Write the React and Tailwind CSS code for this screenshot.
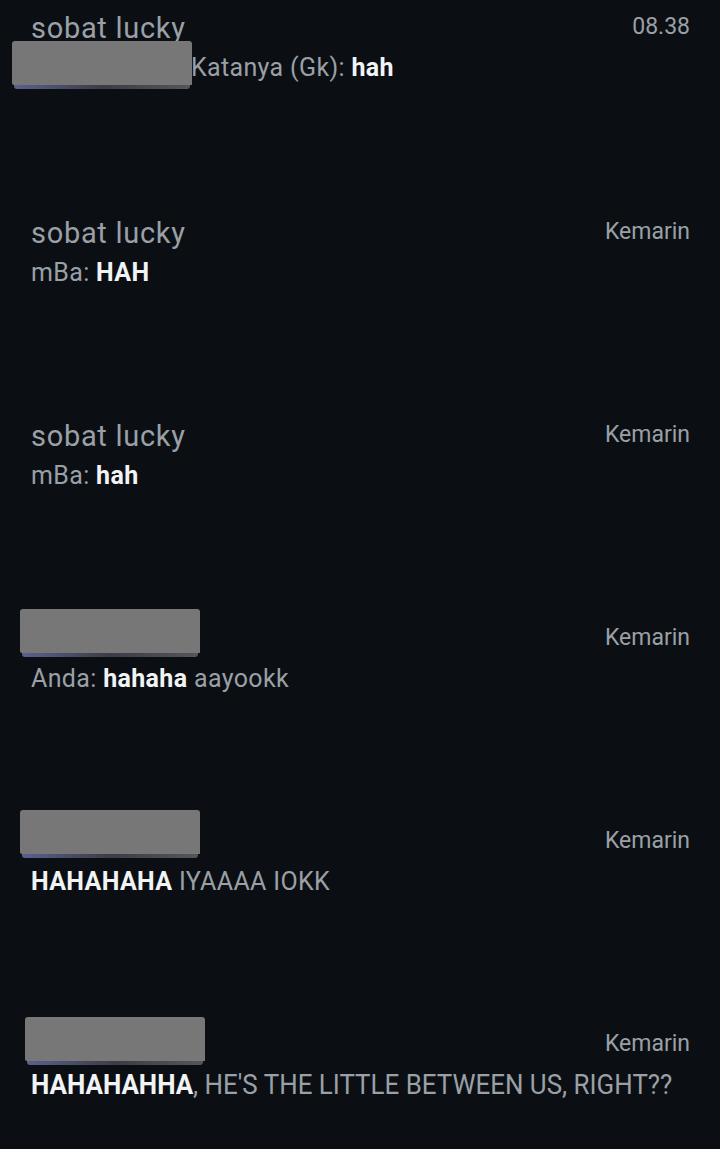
import React from "react";

const rows = [
  {
    name: "sobat lucky",
    time: "08.38",
    parts: [
      { t: "Katanya (Gk): ", b: false },
      { t: "hah", b: true },
    ],
    indent: true,
    box: "left-[12px] top-[41px]",
  },
  {
    name: "sobat lucky",
    time: "Kemarin",
    parts: [
      { t: "mBa: ", b: false },
      { t: "HAH", b: true },
    ],
  },
  {
    name: "sobat lucky",
    time: "Kemarin",
    parts: [
      { t: "mBa: ", b: false },
      { t: "hah", b: true },
    ],
  },
  {
    name: "",
    time: "Kemarin",
    parts: [
      { t: "Anda: ", b: false },
      { t: "hahaha", b: true },
      { t: " aayookk", b: false },
    ],
    box: "left-[20px] top-0",
  },
  {
    name: "",
    time: "Kemarin",
    parts: [
      { t: "HAHAHAHA", b: true },
      { t: " IYAAAA IOKK", b: false },
    ],
    box: "left-[20px] -top-[2px]",
  },
  {
    name: "",
    time: "Kemarin",
    parts: [
      { t: "HAHAHAHHA", b: true },
      { t: ", HE'S THE LITTLE BETWEEN US, RIGHT??", b: false },
    ],
    box: "left-[25px] top-[2px]",
    condensed: true,
  },
];

function Redact({ pos }) {
  return (
    <div className={`absolute ${pos} w-[180px] h-[48px] flex flex-col`}>
      <div className="h-[44px] bg-[#777777] rounded-t-[3px] rounded-bl-[2px]" />
      <div className="h-[4px] mx-[2px] rounded-b-[3px] bg-gradient-to-r from-[#5a6090] via-[#3c3d44] to-[#55555a]" />
    </div>
  );
}

export default function App() {
  return (
    <div
      className="w-[720px] h-[1149px] bg-[#0b0f14] overflow-hidden"
      style={{ fontFamily: "Roboto, 'Liberation Sans', sans-serif" }}
    >
      {rows.map((r, i) => (
        <div key={i} className={`relative h-[203px] pl-[31px] pr-[30px] ${i === 0 ? "pt-[11px]" : "pt-[13px]"}`}>
          <div className="flex items-start justify-between">
            <div className="text-[29px] tracking-[0.7px] leading-[34px] text-[#9aa0a6] h-[34px]">{r.name}</div>
            <div className="text-[23px] leading-[31px] text-[#9aa0a6]">{r.time}</div>
          </div>
          <div
            className={`mt-[7px] leading-[32px] text-[#9aa0a6] whitespace-nowrap ${
              r.indent ? "pl-[160px]" : ""
            } ${r.condensed ? "text-[27px] scale-x-[0.96] origin-left" : "text-[25px] tracking-[0.35px]"}`}
          >
            {r.parts.map((p, j) => (
              <span key={j} className={p.b ? "font-bold text-[#f1f3f4]" : ""}>
                {p.t}
              </span>
            ))}
          </div>
          {r.box && <Redact pos={r.box} />}
        </div>
      ))}
    </div>
  );
}
